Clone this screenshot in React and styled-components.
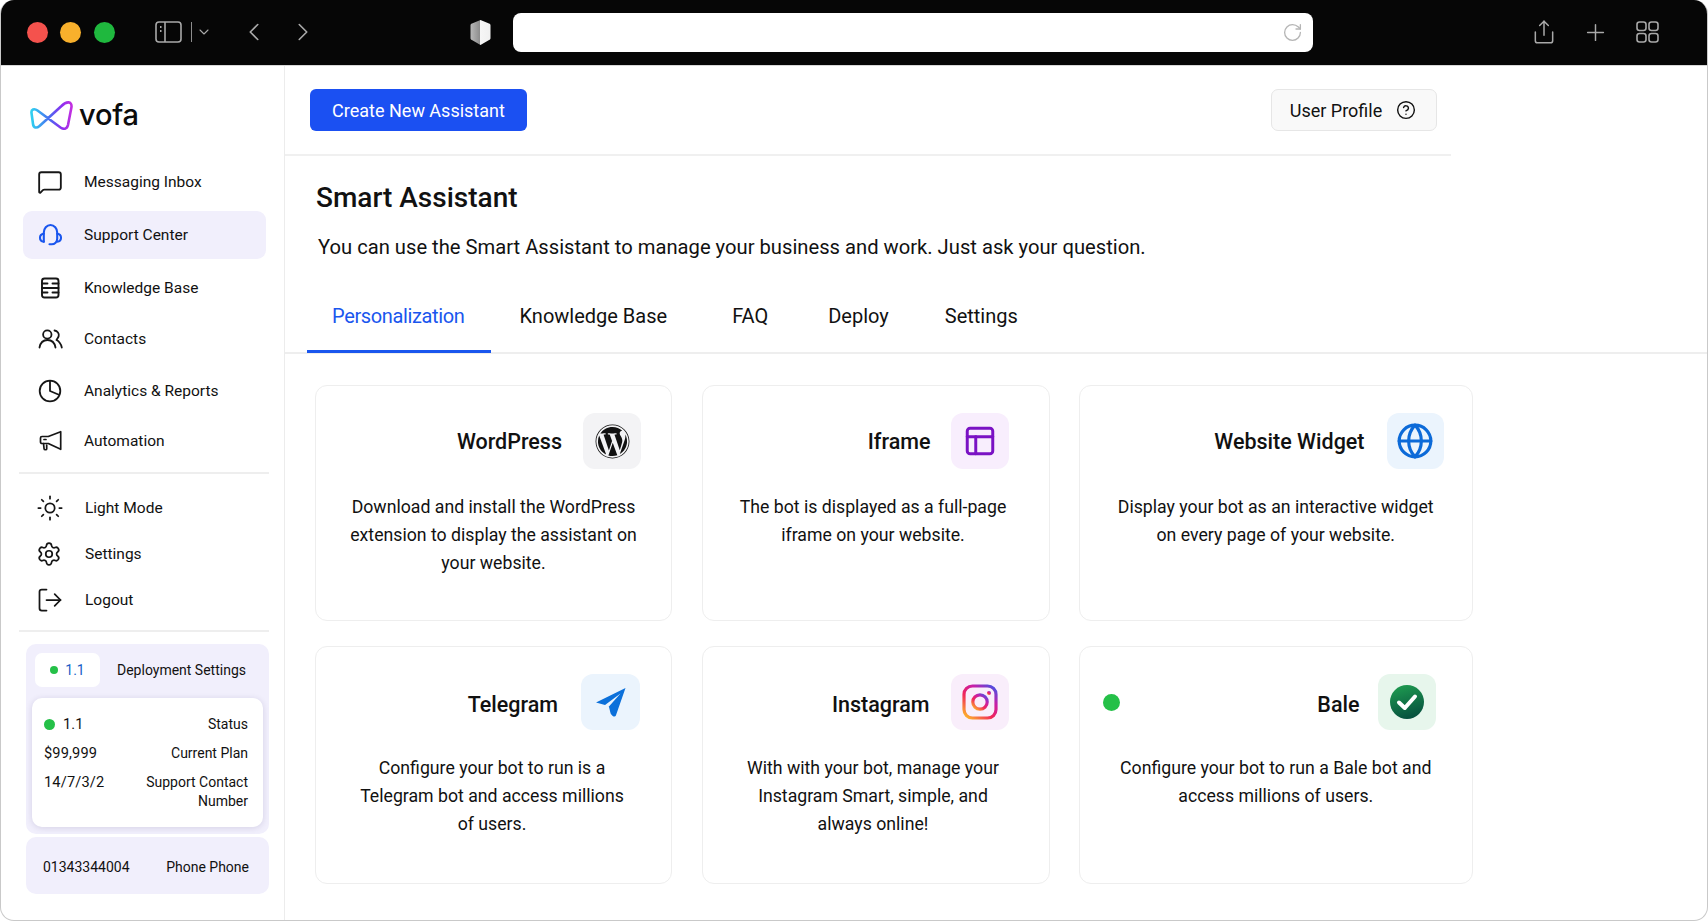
import React from 'react';
import styled, { createGlobalStyle } from 'styled-components';
import { MessageSquare, Sun, Settings, LogOut, CircleHelp, ChevronDown, ChevronLeft, ChevronRight, RotateCw, Share, Plus, PanelsTopLeft, Globe } from 'lucide-react';
import { FaWordpress } from 'react-icons/fa';

const Global = createGlobalStyle`
  html, body { margin: 0; padding: 0; background: #fff; }
  * { box-sizing: border-box; }
  body { font-family: Roboto, "Liberation Sans", sans-serif; color: #111; }
`;

const Frame = styled.div`
  width: 1708px; height: 921px; display: flex; flex-direction: column; overflow: hidden;
  border-radius: 14px; border: 1px solid #c9c9c9; border-top: 0; background: #fff;
`;
const TitleBar = styled.header`
  height: 66px; flex: none; background: #060606; border-bottom: 1px solid #d8d8d8; margin: 0 -1px;
  display: flex; align-items: center; padding: 0 0 1px 27px; color: #a9a9a9;
`;
const Light = styled.span`
  width: 21px; height: 21px; border-radius: 50%; background: ${p => p.$c}; margin-right: ${p => p.$mr}px; flex: none;
`;
const ToolSlot = styled.span`
  display: inline-flex; align-items: center; justify-content: center; flex: none; margin-left: ${p => p.$ml || 0}px;
`;
const Sep = styled.span`
  width: 1px; height: 20px; background: #8c8c8c; margin-left: 9px; flex: none;
`;
const UrlBar = styled.div`
  width: 800px; height: 39px; border-radius: 8px; background: #fff; margin-left: 22px; display: flex; align-items: center;
  justify-content: flex-end; padding-right: 10px; color: #b5b5b5; flex: none;
`;
const Body = styled.div`
  flex: 1; display: flex; min-height: 0;
`;
const Sidebar = styled.aside`
  width: 284px; flex: none; border-right: 1px solid #ececec; display: flex; flex-direction: column; padding: 33px 16px 0 17px;
`;
const LogoRow = styled.div`
  display: flex; align-items: center; gap: 4px; padding-left: 11px; height: 31px;
`;
const LogoWord = styled.span`
  font-family: Inter, sans-serif; font-size: 29px; font-weight: 500; line-height: 29px; letter-spacing: -0.2px; color: #0c0c0c;
`;
const Nav = styled.nav`
  display: flex; flex-direction: column; margin-top: ${p => p.$mt}px;
`;
const NavItem = styled.a`
  display: flex; align-items: center; height: ${p => p.$h || 48}px; margin: ${p => p.$mt || 0}px 0 0 5px; width: 243px; padding-left: ${p => p.$pl || 14}px;
  border-radius: 9px; gap: ${p => p.$gap || 21}px; font-size: 15.5px; color: #111; background: ${p => p.$active ? '#f1effc' : 'transparent'};
  svg { flex: none; color: ${p => p.$active ? '#1a56ee' : '#161616'}; }
`;
const Rule = styled.hr`
  border: 0; height: 2px; background: #eeeeee; margin: ${p => p.$mt}px 0 0 1px; width: 250px;
`;
const Panel = styled.section`
  background: #f1effc; border-radius: 10px; width: 243px; margin: ${p => p.$mt}px 0 0 8px;
`;
const DeployPanel = styled(Panel)`
  padding: 9px 6px 7px;
`;
const DeployHead = styled.div`
  display: flex; justify-content: space-between; align-items: center; padding: 0 17px 0 3px; font-size: 14px;
`;
const Pill = styled.span`
  width: 65px; height: 34px; background: #fff; border-radius: 7px; display: flex; align-items: center; justify-content: center; gap: 7px; color: #1a5fc8; font-size: 14px;
`;
const Dot = styled.i`
  display: block; width: ${p => p.$s}px; height: ${p => p.$s}px; border-radius: 50%; background: #25c048; flex: none;
`;
const InnerCard = styled.div`
  background: #fff; border-radius: 10px; margin-top: 11px; padding: 17px 15px 16px 12px; box-shadow: 0 1px 6px rgba(40, 30, 90, 0.14);
  display: flex; flex-direction: column; gap: 10px; font-size: 14px;
`;
const InfoRow = styled.div`
  display: flex; justify-content: space-between; align-items: flex-start; line-height: 19px;
`;
const InfoValue = styled.span`
  display: flex; align-items: center; gap: 8px; font-size: 14.6px; letter-spacing: 0.15px;
`;
const InfoLabel = styled.span`
  text-align: right; max-width: 112px;
`;
const PhonePanel = styled(Panel)`
  height: 57px; display: flex; justify-content: space-between; align-items: center; padding: 3px 20px 0 17px; font-size: 14px;
`;
const Main = styled.main`
  flex: 1; min-width: 0; display: flex; flex-direction: column;
`;
const TopBar = styled.div`
  width: 1166px; height: 90px; flex: none; border-bottom: 2px solid #f0f0f0; display: flex; align-items: center; justify-content: space-between;
  padding: 0 14px 0 25px;
`;
const PrimaryButton = styled.button`
  width: 217px; height: 42px; border: 0; border-radius: 6px; background: #1b50f2; color: #fff; font: 400 18px Roboto, sans-serif;
`;
const GhostButton = styled.button`
  width: 166px; height: 42px; border: 1px solid #e6e6e6; border-radius: 7px; background: #f9f9f9; color: #111; font: 400 18px Roboto, sans-serif;
  display: flex; align-items: center; justify-content: center; gap: 14px; padding: 0 2px 0 0;
`;
const Heading = styled.div`
  padding: 24px 0 0 31px;
`;
const Title = styled.h1`
  margin: 0; font-size: 28px; line-height: 36px; font-weight: 500; color: #111;
`;
const Sub = styled.p`
  margin: 18px 0 0 2px; font-size: 20.2px; line-height: 26px; color: #111;
`;
const TabBar = styled.div`
  display: flex; margin-top: 20px; padding-left: 22px; height: 74px; border-bottom: 2px solid #eeeeee; flex: none;
`;
const Tab = styled.a`
  height: 73px; display: flex; align-items: center; font-size: 20px; padding: 2px ${p => p.$pr}px 0 ${p => p.$pl}px;
  letter-spacing: ${p => p.$active ? '-0.36px' : '0'};
  color: ${p => p.$active ? '#1a56ee' : '#111'}; border-bottom: 3px solid ${p => p.$active ? '#1a56ee' : 'transparent'};
`;
const Grid = styled.div`
  display: grid; grid-template-columns: 357px 348px 393.5px; grid-template-rows: 236px 238px; column-gap: 29.5px; row-gap: 25px;
  padding: 31px 0 0 30px;
`;
const Card = styled.article`
  border: 1px solid #eeeeee; border-radius: 12px; padding-top: 27px; background: #fff;
`;
const CardHead = styled.div`
  display: flex; align-items: center; justify-content: flex-end; gap: ${p => p.$gap}px; padding: 0 ${p => p.$pr}px 0 23px;
`;
const StatusDot = styled(Dot)`
  margin-right: auto;
`;
const CardTitle = styled.h2`
  margin: 0; padding-top: ${p => p.$drop || 0}px; font-size: 21.5px; font-weight: 500; color: #111;
`;
const Tile = styled.span`
  width: ${p => p.$w || 57}px; height: 56px; border-radius: 12px; background: ${p => p.$bg}; display: flex; align-items: center; justify-content: center; flex: none;
  color: ${p => p.$fg};
`;
const CardText = styled.p`
  margin: 24px 0 0; text-align: center; font-size: 17.7px; line-height: 28.2px; white-space: pre-line; color: #111; padding-right: ${p => p.$shift || 0}px;
`;

const SidebarToggle = () => (
  <svg width="27" height="22" viewBox="0 0 27 22" fill="none" stroke="currentColor" strokeWidth="1.6">
    <rect x="1" y="1" width="25" height="20" rx="3" />
    <path d="M10 1v20" />
    <path d="M5 6h1.5M5 10h1.5" strokeWidth="2" />
  </svg>
);
const ShieldIcon = () => (
  <svg width="21" height="25" viewBox="0 0 21 25">
    <defs>
      <linearGradient id="shield" x1="0" y1="0" x2="1" y2="0">
        <stop offset="0" stopColor="#b8b8b8" /><stop offset="0.5" stopColor="#8a8a8a" /><stop offset="0.5" stopColor="#f6f6f6" /><stop offset="1" stopColor="#f0f0f0" />
      </linearGradient>
    </defs>
    <path d="M10.5 0 19 3.6c1 .4 1.5 1 1.5 2V18c0 1-.5 1.6-1.4 2.1L10.5 25 1.9 20.100C1 19.600.5 19 .5 18V5.600c0-1 .5-1.600 1.500-2z" fill="url(#shield)" />
  </svg>
);
const TabsGrid = () => (
  <svg width="23" height="22" viewBox="0 0 23 22" fill="none" stroke="currentColor" strokeWidth="1.6">
    <rect x="1" y="1" width="9" height="8.5" rx="2.5" /><rect x="13" y="1" width="9" height="8.5" rx="2.5" />
    <rect x="1" y="12.5" width="9" height="8.5" rx="2.5" /><rect x="13" y="12.5" width="9" height="8.5" rx="2.5" />
  </svg>
);
const Logo = () => (
  <svg width="46" height="30" viewBox="0 0 45 30" fill="none">
    <defs>
      <linearGradient id="vofa" x1="0" y1="0" x2="1" y2="0">
        <stop offset="0" stopColor="#2fd0f0" /><stop offset="0.45" stopColor="#4a6cf0" /><stop offset="0.75" stopColor="#8a2ff0" /><stop offset="1" stopColor="#c22fe0" />
      </linearGradient>
    </defs>
    <path d="M10 26 32 6C37 1 42.500 1 42 7L38.500 25C37.500 29.500 34 29.500 31 27.500L8 10.500C4.500 8 1.500 9.500 2 13L3.500 24C4 28 7 28.500 10 26Z" stroke="url(#vofa)" strokeWidth="2.6" strokeLinejoin="round" />
  </svg>
);
const HeadsetIcon = () => (
  <svg width="26" height="26" viewBox="0 0 26 26" fill="none" stroke="currentColor" strokeWidth="2.1" strokeLinecap="round" strokeLinejoin="round">
    <path d="M6.800 19.700V10.500a6.700 7.500 0 0 1 13.400 0v6.300a5.500 5.500 0 0 1-5.500 5.500h-2.200" />
    <path d="M6.800 11.700C4.300 12 3 13.700 3 15.700s1.300 3.700 3.800 4" />
    <path d="M20.200 11.700c2.500.3 3.800 2 3.800 4s-1.300 3.700-3.800 4" />
  </svg>
);
const KnowledgeIcon = () => (
  <svg width="26" height="26" viewBox="0 0 26 26" fill="none" stroke="currentColor" strokeWidth="1.9" strokeLinecap="round">
    <rect x="5" y="3.500" width="16.500" height="19" rx="2.500" />
    <path d="M5 13h16.500M5 8.500h5.500M15.500 8.500h6M5 17.500h5.500M15.500 17.500h6" />
  </svg>
);
const ContactsIcon = () => (
  <svg width="26" height="26" viewBox="0 0 26 26" fill="none" stroke="currentColor" strokeWidth="1.8" strokeLinecap="round" strokeLinejoin="round">
    <circle cx="10.300" cy="8.500" r="4.200" />
    <path d="M2.500 21.500C3.500 16 7 14 10.500 14s7 2 8 7.500" />
    <path d="M17.500 4.500c3 .5 4.800 3 4.200 5.500-.4 1.800-1.800 3-2.200 4 2 1 4.500 4 5.300 7.500" />
  </svg>
);
const PieIcon = () => (
  <svg width="26" height="26" viewBox="0 0 26 26" fill="none" stroke="currentColor" strokeWidth="1.8" strokeLinejoin="round">
    <circle cx="13" cy="13" r="10.300" />
    <path d="M13 2.700V13l9.500 4" />
  </svg>
);
const HornIcon = () => (
  <svg width="26" height="26" viewBox="0 0 26 26" fill="none" stroke="currentColor" strokeWidth="1.7" strokeLinejoin="round" strokeLinecap="round">
    <path d="M23.700 3.700v17.600L11.300 15.500H5A1.500 1.500 0 0 1 3.500 14v-4A1.500 1.500 0 0 1 5 8.500h6.300z" />
    <path d="M6.500 15.500l.6 5.500c.1 1 2.600 1 2.600 0v-4M7 11.500h2" />
  </svg>
);
const PlaneIcon = () => (
  <svg width="33" height="30" viewBox="0 0 32 30">
    <path d="M31 1 1.500 15.500l9 2.500L26 6.500 14 20l.5 0 1.500 6c.3 1.200 1.500 2.600 3 3.400 1 .4 2 .2 2.400-.8L31 1z" fill="#0c70da" />
  </svg>
);
const InstaIcon = () => (
  <svg width="36" height="36" viewBox="0 0 36 36" fill="none">
    <defs>
      <linearGradient id="ig" x1="0.1" y1="1" x2="0.9" y2="0">
        <stop offset="0" stopColor="#fdb12c" /><stop offset="0.4" stopColor="#f0255a" /><stop offset="0.7" stopColor="#c81ea8" /><stop offset="1" stopColor="#4f4fe0" />
      </linearGradient>
    </defs>
    <rect x="2" y="2" width="32" height="32" rx="8.500" stroke="url(#ig)" strokeWidth="3.2" />
    <circle cx="18" cy="18" r="7.200" stroke="url(#ig)" strokeWidth="3.2" />
    <circle cx="27" cy="9" r="2" fill="url(#ig)" />
  </svg>
);
const BaleIcon = () => (
  <svg width="36" height="36" viewBox="0 0 36 36">
    <defs>
      <linearGradient id="bale" x1="0.3" y1="0" x2="0.6" y2="1">
        <stop offset="0" stopColor="#1e9a50" /><stop offset="1" stopColor="#064f3e" />
      </linearGradient>
    </defs>
    <circle cx="18" cy="18" r="17" fill="url(#bale)" />
    <path d="M10 18.500 15.800 24 26 12.500" fill="none" stroke="#fff" strokeWidth="4" strokeLinecap="round" strokeLinejoin="round" />
  </svg>
);

const navTop = [
  { label: 'Messaging Inbox', icon: <MessageSquare size={26} strokeWidth={1.7} />, mt: 0 },
  { label: 'Support Center', icon: <HeadsetIcon />, mt: 5, active: true },
  { label: 'Knowledge Base', icon: <KnowledgeIcon />, mt: 5 },
  { label: 'Contacts', icon: <ContactsIcon />, mt: 3 },
  { label: 'Analytics & Reports', icon: <PieIcon />, mt: 4 },
  { label: 'Automation', icon: <HornIcon />, mt: 2 },
];
const navBottom = [
  { label: 'Light Mode', icon: <Sun size={28} strokeWidth={1.5} />, gap: 21 },
  { label: 'Settings', icon: <Settings size={26} strokeWidth={1.6} />, gap: 23 },
  { label: 'Logout', icon: <LogOut size={28} strokeWidth={1.5} />, gap: 21 },
];
const tabs = [
  { label: 'Personalization', active: true, pl: 25, pr: 26 },
  { label: 'Knowledge Base', pl: 29, pr: 32 },
  { label: 'FAQ', pl: 33, pr: 29 },
  { label: 'Deploy', pl: 31, pr: 27 },
  { label: 'Settings', pl: 29, pr: 0 },
];
const cards = [
  { title: 'WordPress', tile: '#f3f3f5', pr: 30, gap: 21, icon: <FaWordpress size={35} color="#111" />, text: 'Download and install the WordPress\nextension to display the assistant on\nyour website.', w: 58 },
  { title: 'Iframe', tile: '#f8eefd', fg: '#7a12c4', pr: 40, gap: 20, w: 58, icon: <PanelsTopLeft size={34} strokeWidth={2.1} />, text: 'The bot is displayed as a full-page\niframe on your website.', shift: 5 },
  { title: 'Website Widget', tile: '#ebf4fd', fg: '#0c6ad8', pr: 28, gap: 22, icon: <Globe size={38} strokeWidth={2} />, text: 'Display your bot as an interactive widget\non every page of your website.' },
  { title: 'Telegram', tile: '#ebf4fd', w: 59, pr: 31, gap: 23, drop: 4, icon: <PlaneIcon />, text: 'Configure your bot to run is a\nTelegram bot and access millions\nof users.', shift: 3 },
  { title: 'Instagram', tile: '#f9eefb', pr: 40, gap: 21, w: 58, drop: 4, icon: <InstaIcon />, text: 'With with your bot, manage your\nInstagram Smart, simple, and\nalways online!', shift: 5 },
  { title: 'Bale', tile: '#e7f6ec', w: 58, pr: 36, gap: 18, drop: 4, dot: true, icon: <BaleIcon />, text: 'Configure your bot to run a Bale bot and\naccess millions of users.' },
];

export default function App() {
  return (
    <>
      <Global />
      <Frame>
        <TitleBar>
          <Light $c="#f4524d" $mr={12} />
          <Light $c="#f8b02c" $mr={13} />
          <Light $c="#1fb83e" $mr={40} />
          <SidebarToggle />
          <Sep />
          <ToolSlot $ml={4}><ChevronDown size={16} strokeWidth={1.6} /></ToolSlot>
          <ToolSlot $ml={27}><ChevronLeft size={30} strokeWidth={1.3} /></ToolSlot>
          <ToolSlot $ml={19}><ChevronRight size={30} strokeWidth={1.3} /></ToolSlot>
          <ToolSlot $ml={152}><ShieldIcon /></ToolSlot>
          <UrlBar><RotateCw size={21} strokeWidth={1.5} /></UrlBar>
          <ToolSlot $ml={218}><Share size={26} strokeWidth={1.4} /></ToolSlot>
          <ToolSlot $ml={25}><Plus size={27} strokeWidth={1.3} /></ToolSlot>
          <ToolSlot $ml={27}><TabsGrid /></ToolSlot>
        </TitleBar>
        <Body>
          <Sidebar>
            <LogoRow><Logo /><LogoWord>vofa</LogoWord></LogoRow>
            <Nav $mt={28}>
              {navTop.map(n => (
                <NavItem key={n.label} $mt={n.mt} $active={n.active}>{n.icon}<span>{n.label}</span></NavItem>
              ))}
            </Nav>
            <Rule $mt={7} />
            <Nav as="div" $mt={14}>
              {navBottom.map((n, i) => (
                <NavItem key={n.label} $h={40} $mt={i ? 6 : 0} $pl={13} $gap={n.gap}>{n.icon}<span>{n.label}</span></NavItem>
              ))}
            </Nav>
            <Rule $mt={10} />
            <DeployPanel $mt={12}>
              <DeployHead>
                <Pill><Dot $s={8} />1.1</Pill>
                <span>Deployment Settings</span>
              </DeployHead>
              <InnerCard>
                <InfoRow><InfoValue><Dot $s={11} />1.1</InfoValue><InfoLabel>Status</InfoLabel></InfoRow>
                <InfoRow><InfoValue>$99,999</InfoValue><InfoLabel>Current Plan</InfoLabel></InfoRow>
                <InfoRow><InfoValue>14/7/3/2</InfoValue><InfoLabel>Support Contact Number</InfoLabel></InfoRow>
              </InnerCard>
            </DeployPanel>
            <PhonePanel $mt={3}><span>01343344004</span><span>Phone Phone</span></PhonePanel>
          </Sidebar>
          <Main>
            <TopBar>
              <PrimaryButton>Create New Assistant</PrimaryButton>
              <GhostButton>User Profile<CircleHelp size={20} strokeWidth={1.7} /></GhostButton>
            </TopBar>
            <Heading>
              <Title>Smart Assistant</Title>
              <Sub>You can use the Smart Assistant to manage your business and work. Just ask your question.</Sub>
            </Heading>
            <TabBar>
              {tabs.map(t => <Tab key={t.label} $active={t.active} $pl={t.pl} $pr={t.pr}>{t.label}</Tab>)}
            </TabBar>
            <Grid>
              {cards.map(c => (
                <Card key={c.title}>
                  <CardHead $gap={c.gap} $pr={c.pr}>
                    {c.dot && <StatusDot $s={17} />}
                    <CardTitle $drop={c.drop}>{c.title}</CardTitle>
                    <Tile $bg={c.tile} $fg={c.fg} $w={c.w}>{c.icon}</Tile>
                  </CardHead>
                  <CardText $shift={c.shift}>{c.text}</CardText>
                </Card>
              ))}
            </Grid>
          </Main>
        </Body>
      </Frame>
    </>
  );
}
